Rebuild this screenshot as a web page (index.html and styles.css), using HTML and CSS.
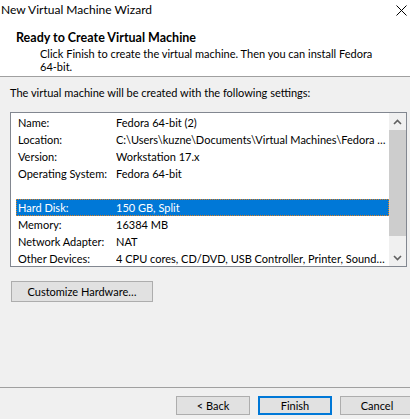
FILE: index.html
```html
<!DOCTYPE html>
<html>
<head>
<meta charset="utf-8">
<link rel="stylesheet" href="styles.css">
</head>
<body>
<div class="window">
  <div class="titlebar">
    <span class="title">New Virtual Machine Wizard</span>
    <svg class="close" width="11" height="11" viewBox="0 0 11 11"><path d="M0.5 0.5 L10.5 10.5 M10.5 0.5 L0.5 10.5" stroke="#000" stroke-width="1"/></svg>
  </div>
  <div class="header">
    <div class="heading">Ready to Create Virtual Machine</div>
    <div class="desc">Click Finish to create the virtual machine. Then you can install Fedora<br>64-bit.</div>
  </div>
  <div class="content">
    <div class="intro">The virtual machine will be created with the following settings:</div>
    <div class="listbox">
      <div class="rows">
        <div class="row"><span class="lbl">Name:</span><span class="val">Fedora 64-bit (2)</span></div>
        <div class="row"><span class="lbl">Location:</span><span class="val">C:\Users\kuzne\Documents\Virtual Machines\Fedora …</span></div>
        <div class="row"><span class="lbl">Version:</span><span class="val">Workstation 17.x</span></div>
        <div class="row"><span class="lbl">Operating System:</span><span class="val">Fedora 64-bit</span></div>
        <div class="row"><span class="lbl"></span><span class="val"></span></div>
        <div class="row selected"><span class="lbl">Hard Disk:</span><span class="val">150 GB, Split</span></div>
        <div class="row"><span class="lbl">Memory:</span><span class="val">16384 MB</span></div>
        <div class="row"><span class="lbl">Network Adapter:</span><span class="val">NAT</span></div>
        <div class="row"><span class="lbl">Other Devices:</span><span class="val">4 CPU cores, CD/DVD, USB Controller, Printer, Sound…</span></div>
      </div>
      <div class="scrollbar">
        <div class="arrow"><svg width="9" height="6" viewBox="0 0 9 6"><path d="M1 5 L4.5 1.5 L8 5" fill="none" stroke="#606060" stroke-width="1.6"/></svg></div>
        <div class="track"><div class="thumb"></div></div>
        <div class="arrow"><svg width="9" height="6" viewBox="0 0 9 6"><path d="M1 1 L4.5 4.5 L8 1" fill="none" stroke="#606060" stroke-width="1.6"/></svg></div>
      </div>
    </div>
    <button class="btn customize">Customize Hardware…</button>
  </div>
  <div class="footer">
    <button class="btn">&lt; Back</button>
    <button class="btn primary">Finish</button>
    <button class="btn">Cancel</button>
  </div>
</div>
</body>
</html>
```
FILE: styles.css
```css
html, body {
  margin: 0;
  padding: 0;
}
body {
  width: 410px;
  height: 419px;
  overflow: hidden;
  background: #f0f0f0;
  font-family: Lato, "Liberation Sans", sans-serif;
  font-size: 11px;
  color: #000;
}
.window {
  display: flex;
  flex-direction: column;
  height: 419px;
}
.titlebar {
  background: #fff;
  height: 20px;
  display: flex;
  align-items: center;
  justify-content: space-between;
  padding: 0 3px 2px 1px;
  box-sizing: border-box;
}
.title {
  font-size: 12px;
}
.close {
  display: block;
  margin-top: 2px;
}
.header {
  background: #fff;
  height: 57px;
  box-sizing: border-box;
  border-bottom: 1px solid #a0a0a0;
  padding: 10px 20px 0 16px;
}
.heading {
  font-weight: bold;
  font-size: 12.5px;
  line-height: 16px;
}
.desc {
  padding-left: 24px;
  line-height: 13px;
  margin-top: 1px;
  white-space: nowrap;
}
.content {
  flex: 1;
  padding: 8px 3px 0 10px;
}
.intro {
  line-height: 16px;
}
.listbox {
  margin-top: 11px;
  height: 155px;
  box-sizing: border-box;
  border: 1px solid #828790;
  background: #fff;
  display: flex;
}
.rows {
  flex: 1;
  min-width: 0;
  overflow: hidden;
  padding: 1px 0 0 5px;
}
.row {
  display: grid;
  grid-template-columns: 98px 1fr;
  height: 17px;
  line-height: 15px;
  white-space: nowrap;
  box-sizing: border-box;
  border: 1px solid transparent;
  padding-left: 1px;
}
.row .val {
  overflow: hidden;
}
.row.selected {
  background: #0078d7;
  color: #fff;
  border: 1px dotted #e08020;
}
.scrollbar {
  width: 17px;
  flex: none;
  display: flex;
  flex-direction: column;
  background: #f0f0f0;
}
.arrow {
  height: 17px;
  display: flex;
  align-items: center;
  justify-content: center;
}
.track {
  flex: 1;
}
.thumb {
  height: 106px;
  background: #cdcdcd;
}
.btn {
  font-family: inherit;
  font-size: 11px;
  background: #e1e1e1;
  border: 1px solid #adadad;
  color: #000;
  padding: 0;
  margin: 0;
  box-sizing: border-box;
}
.customize {
  margin-top: 14px;
  margin-left: 1px;
  width: 142px;
  height: 21px;
}
.footer {
  border-top: 1px solid #a0a0a0;
  height: 32px;
  box-sizing: border-box;
  display: flex;
  gap: 8px;
  padding: 8px 0 0 176px;
}
.footer .btn {
  width: 74px;
  height: 19px;
  flex: none;
}
.footer .primary {
  border: 2px solid #0078d7;
}
```
